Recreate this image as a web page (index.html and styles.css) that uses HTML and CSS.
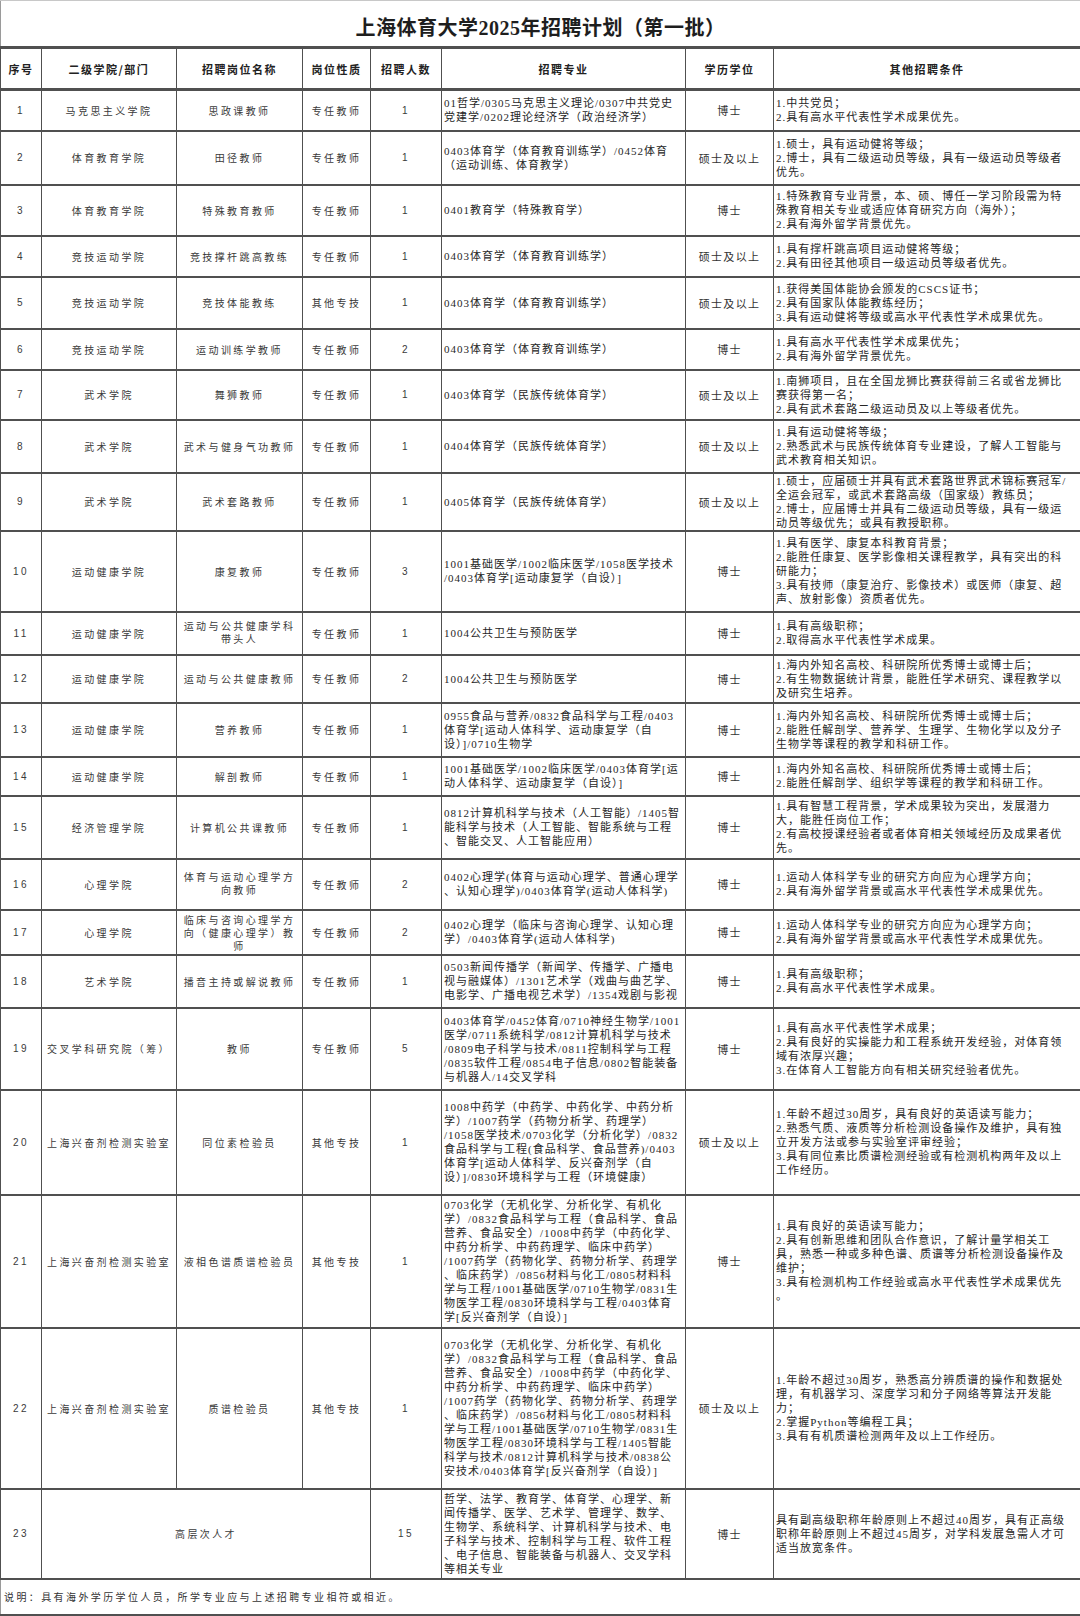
FILE: index.html
```html
<!DOCTYPE html>
<html lang="zh-CN">
<head>
<meta charset="utf-8">
<title>上海体育大学2025年招聘计划（第一批）</title>
<link rel="stylesheet" href="styles.css">
</head>
<body>
<div class="sheet">
<table class="plan">
<colgroup>
<col class="c1"><col class="c2"><col class="c3"><col class="c4"><col class="c5"><col class="c6"><col class="c7"><col class="c8">
</colgroup>
<tbody>
<tr class="h47"><td class="title" colspan="8">上海体育大学2025年招聘计划（第一批）</td></tr>
<tr class="h42 head">
<th>序号</th><th>二级学院/部门</th><th>招聘岗位名称</th><th>岗位性质</th><th>招聘人数</th><th>招聘专业</th><th>学历学位</th><th>其他招聘条件</th>
</tr>
<tr class="h41"><td class="s">1</td><td class="s">马克思主义学院</td><td class="s">思政课教师</td><td class="s">专任教师</td><td class="s">1</td>
<td class="m">01哲学/0305马克思主义理论/0307中共党史<br>党建学/0202理论经济学（政治经济学）</td><td class="d">博士</td>
<td class="m">1.中共党员；<br>2.具有高水平代表性学术成果优先。</td></tr>
<tr class="h54"><td class="s">2</td><td class="s">体育教育学院</td><td class="s">田径教师</td><td class="s">专任教师</td><td class="s">1</td>
<td class="m">0403体育学（体育教育训练学）/0452体育<br>（运动训练、体育教学）</td><td class="d">硕士及以上</td>
<td class="m">1.硕士，具有运动健将等级；<br>2.博士，具有二级运动员等级，具有一级运动员等级者<br>优先。</td></tr>
<tr class="h51"><td class="s">3</td><td class="s">体育教育学院</td><td class="s">特殊教育教师</td><td class="s">专任教师</td><td class="s">1</td>
<td class="m">0401教育学（特殊教育学）</td><td class="d">博士</td>
<td class="m">1.特殊教育专业背景，本、硕、博任一学习阶段需为特<br>殊教育相关专业或适应体育研究方向（海外）；<br>2.具有海外留学背景优先。</td></tr>
<tr class="h41"><td class="s">4</td><td class="s">竞技运动学院</td><td class="s">竞技撑杆跳高教练</td><td class="s">专任教师</td><td class="s">1</td>
<td class="m">0403体育学（体育教育训练学）</td><td class="d">硕士及以上</td>
<td class="m">1.具有撑杆跳高项目运动健将等级；<br>2.具有田径其他项目一级运动员等级者优先。</td></tr>
<tr class="h52"><td class="s">5</td><td class="s">竞技运动学院</td><td class="s">竞技体能教练</td><td class="s">其他专技</td><td class="s">1</td>
<td class="m">0403体育学（体育教育训练学）</td><td class="d">硕士及以上</td>
<td class="m">1.获得美国体能协会颁发的CSCS证书；<br>2.具有国家队体能教练经历；<br>3.具有运动健将等级或高水平代表性学术成果优先。</td></tr>
<tr class="h41"><td class="s">6</td><td class="s">竞技运动学院</td><td class="s">运动训练学教师</td><td class="s">专任教师</td><td class="s">2</td>
<td class="m">0403体育学（体育教育训练学）</td><td class="d">博士</td>
<td class="m">1.具有高水平代表性学术成果优先；<br>2.具有海外留学背景优先。</td></tr>
<tr class="h50"><td class="s">7</td><td class="s">武术学院</td><td class="s">舞狮教师</td><td class="s">专任教师</td><td class="s">1</td>
<td class="m">0403体育学（民族传统体育学）</td><td class="d">硕士及以上</td>
<td class="m">1.南狮项目，且在全国龙狮比赛获得前三名或省龙狮比<br>赛获得第一名；<br>2.具有武术套路二级运动员及以上等级者优先。</td></tr>
<tr class="h53"><td class="s">8</td><td class="s">武术学院</td><td class="s">武术与健身气功教师</td><td class="s">专任教师</td><td class="s">1</td>
<td class="m">0404体育学（民族传统体育学）</td><td class="d">硕士及以上</td>
<td class="m">1.具有运动健将等级；<br>2.熟悉武术与民族传统体育专业建设，了解人工智能与<br>武术教育相关知识。</td></tr>
<tr class="h56"><td class="s">9</td><td class="s">武术学院</td><td class="s">武术套路教师</td><td class="s">专任教师</td><td class="s">1</td>
<td class="m">0405体育学（民族传统体育学）</td><td class="d">硕士及以上</td>
<td class="m">1.硕士，应届硕士并具有武术套路世界武术锦标赛冠军/<br>全运会冠军，或武术套路高级（国家级）教练员；<br>2.博士，应届博士并具有二级运动员等级，具有一级运<br>动员等级优先；或具有教授职称。</td></tr>
<tr class="h81"><td class="s">10</td><td class="s">运动健康学院</td><td class="s">康复教师</td><td class="s">专任教师</td><td class="s">3</td>
<td class="m">1001基础医学/1002临床医学/1058医学技术<br>/0403体育学[运动康复学（自设）]</td><td class="d">博士</td>
<td class="m">1.具有医学、康复本科教育背景；<br>2.能胜任康复、医学影像相关课程教学，具有突出的科<br>研能力；<br>3.具有技师（康复治疗、影像技术）或医师（康复、超<br>声、放射影像）资质者优先。</td></tr>
<tr class="h43"><td class="s">11</td><td class="s">运动健康学院</td><td class="s wrap">运动与公共健康学科带头人</td><td class="s">专任教师</td><td class="s">1</td>
<td class="m">1004公共卫生与预防医学</td><td class="d">博士</td>
<td class="m">1.具有高级职称；<br>2.取得高水平代表性学术成果。</td></tr>
<tr class="h48"><td class="s">12</td><td class="s">运动健康学院</td><td class="s">运动与公共健康教师</td><td class="s">专任教师</td><td class="s">2</td>
<td class="m">1004公共卫生与预防医学</td><td class="d">博士</td>
<td class="m">1.海内外知名高校、科研院所优秀博士或博士后；<br>2.有生物数据统计背景，能胜任学术研究、课程教学以<br>及研究生培养。</td></tr>
<tr class="h54"><td class="s">13</td><td class="s">运动健康学院</td><td class="s">营养教师</td><td class="s">专任教师</td><td class="s">1</td>
<td class="m">0955食品与营养/0832食品科学与工程/0403<br>体育学[运动人体科学、运动康复学（自<br>设）]/0710生物学</td><td class="d">博士</td>
<td class="m">1.海内外知名高校、科研院所优秀博士或博士后；<br>2.能胜任解剖学、营养学、生理学、生物化学以及分子<br>生物学等课程的教学和科研工作。</td></tr>
<tr class="h39"><td class="s">14</td><td class="s">运动健康学院</td><td class="s">解剖教师</td><td class="s">专任教师</td><td class="s">1</td>
<td class="m">1001基础医学/1002临床医学/0403体育学[运<br>动人体科学、运动康复学（自设）]</td><td class="d">博士</td>
<td class="m">1.海内外知名高校、科研院所优秀博士或博士后；<br>2.能胜任解剖学、组织学等课程的教学和科研工作。</td></tr>
<tr class="h63"><td class="s">15</td><td class="s">经济管理学院</td><td class="s">计算机公共课教师</td><td class="s">专任教师</td><td class="s">1</td>
<td class="m">0812计算机科学与技术（人工智能）/1405智<br>能科学与技术（人工智能、智能系统与工程<br>、智能交叉、人工智能应用）</td><td class="d">博士</td>
<td class="m">1.具有智慧工程背景，学术成果较为突出，发展潜力<br>大，能胜任岗位工作；<br>2.有高校授课经验者或者体育相关领域经历及成果者优<br>先。</td></tr>
<tr class="h51"><td class="s">16</td><td class="s">心理学院</td><td class="s wrap">体育与运动心理学方向教师</td><td class="s">专任教师</td><td class="s">2</td>
<td class="m">0402心理学(体育与运动心理学、普通心理学<br>、认知心理学)/0403体育学(运动人体科学)</td><td class="d">博士</td>
<td class="m">1.运动人体科学专业的研究方向应为心理学方向；<br>2.具有海外留学背景或高水平代表性学术成果优先。</td></tr>
<tr class="h45"><td class="s">17</td><td class="s">心理学院</td><td class="s wrap tight">临床与咨询心理学方向（健康心理学）教师</td><td class="s">专任教师</td><td class="s">2</td>
<td class="m">0402心理学（临床与咨询心理学、认知心理<br>学）/0403体育学(运动人体科学)</td><td class="d">博士</td>
<td class="m">1.运动人体科学专业的研究方向应为心理学方向；<br>2.具有海外留学背景或高水平代表性学术成果优先。</td></tr>
<tr class="h53"><td class="s">18</td><td class="s">艺术学院</td><td class="s">播音主持或解说教师</td><td class="s">专任教师</td><td class="s">1</td>
<td class="m">0503新闻传播学（新闻学、传播学、广播电<br>视与融媒体）/1301艺术学（戏曲与曲艺学、<br>电影学、广播电视艺术学）/1354戏剧与影视</td><td class="d">博士</td>
<td class="m">1.具有高级职称；<br>2.具有高水平代表性学术成果。</td></tr>
<tr class="h82"><td class="s">19</td><td class="s">交叉学科研究院（筹）</td><td class="s">教师</td><td class="s">专任教师</td><td class="s">5</td>
<td class="m">0403体育学/0452体育/0710神经生物学/1001<br>医学/0711系统科学/0812计算机科学与技术<br>/0809电子科学与技术/0811控制科学与工程<br>/0835软件工程/0854电子信息/0802智能装备<br>与机器人/14交叉学科</td><td class="d">博士</td>
<td class="m">1.具有高水平代表性学术成果；<br>2.具有良好的实操能力和工程系统开发经验，对体育领<br>域有浓厚兴趣；<br>3.在体育人工智能方向有相关研究经验者优先。</td></tr>
<tr class="h105"><td class="s">20</td><td class="s">上海兴奋剂检测实验室</td><td class="s">同位素检验员</td><td class="s">其他专技</td><td class="s">1</td>
<td class="m">1008中药学（中药学、中药化学、中药分析<br>学）/1007药学（药物分析学、药理学）<br>/1058医学技术/0703化学（分析化学）/0832<br>食品科学与工程(食品科学、食品营养)/0403<br>体育学[运动人体科学、反兴奋剂学（自<br>设）]/0830环境科学与工程（环境健康）</td><td class="d">硕士及以上</td>
<td class="m">1.年龄不超过30周岁，具有良好的英语读写能力；<br>2.熟悉气质、液质等分析检测设备操作及维护，具有独<br>立开发方法或参与实验室评审经验；<br>3.具有同位素比质谱检测经验或有检测机构两年及以上<br>工作经历。</td></tr>
<tr class="h133"><td class="s">21</td><td class="s">上海兴奋剂检测实验室</td><td class="s">液相色谱质谱检验员</td><td class="s">其他专技</td><td class="s">1</td>
<td class="m">0703化学（无机化学、分析化学、有机化<br>学）/0832食品科学与工程（食品科学、食品<br>营养、食品安全）/1008中药学（中药化学、<br>中药分析学、中药药理学、临床中药学）<br>/1007药学（药物化学、药物分析学、药理学<br>、临床药学）/0856材料与化工/0805材料科<br>学与工程/1001基础医学/0710生物学/0831生<br>物医学工程/0830环境科学与工程/0403体育<br>学[反兴奋剂学（自设）]</td><td class="d">博士</td>
<td class="m">1.具有良好的英语读写能力；<br>2.具有创新思维和团队合作意识，了解计量学相关工<br>具，熟悉一种或多种色谱、质谱等分析检测设备操作及<br>维护；<br>3.具有检测机构工作经验或高水平代表性学术成果优先<br>。</td></tr>
<tr class="h161"><td class="s">22</td><td class="s">上海兴奋剂检测实验室</td><td class="s">质谱检验员</td><td class="s">其他专技</td><td class="s">1</td>
<td class="m">0703化学（无机化学、分析化学、有机化<br>学）/0832食品科学与工程（食品科学、食品<br>营养、食品安全）/1008中药学（中药化学、<br>中药分析学、中药药理学、临床中药学）<br>/1007药学（药物化学、药物分析学、药理学<br>、临床药学）/0856材料与化工/0805材料科<br>学与工程/1001基础医学/0710生物学/0831生<br>物医学工程/0830环境科学与工程/1405智能<br>科学与技术/0812计算机科学与技术/0838公<br>安技术/0403体育学[反兴奋剂学（自设）]</td><td class="d">硕士及以上</td>
<td class="m">1.年龄不超过30周岁，熟悉高分辨质谱的操作和数据处<br>理，有机器学习、深度学习和分子网络等算法开发能<br>力；<br>2.掌握Python等编程工具；<br>3.具有有机质谱检测两年及以上工作经历。</td></tr>
<tr class="h90"><td class="s">23</td><td class="s" colspan="3">高层次人才</td><td class="s">15</td>
<td class="m">哲学、法学、教育学、体育学、心理学、新<br>闻传播学、医学、艺术学、管理学、数学、<br>生物学、系统科学、计算机科学与技术、电<br>子科学与技术、控制科学与工程、软件工程<br>、电子信息、智能装备与机器人、交叉学科<br>等相关专业</td><td class="d">博士</td>
<td class="m">具有副高级职称年龄原则上不超过40周岁，具有正高级<br>职称年龄原则上不超过45周岁，对学科发展急需人才可<br>适当放宽条件。</td></tr>
<tr class="h36"><td class="note" colspan="8">说明：具有海外学历学位人员，所学专业应与上述招聘专业相符或相近。</td></tr>
</tbody>
</table>
</div>
</body>
</html>
```
FILE: styles.css
```css
html, body {
  margin: 0;
  padding: 0;
  background: #ffffff;
}

.sheet {
  width: 1080px;
  height: 1616px;
  overflow: hidden;
  background: #ffffff;
}

.plan {
  width: 1080px;
  border-collapse: collapse;
  table-layout: fixed;
  font-family: "Liberation Serif", "Noto Sans CJK SC", serif;
  color: #262626;
}

.c1 { width: 41px; }
.c2 { width: 135px; }
.c3 { width: 126px; }
.c4 { width: 68px; }
.c5 { width: 71px; }
.c6 { width: 244px; }
.c7 { width: 88px; }
.c8 { width: 307px; }

.plan td,
.plan th {
  padding: 0 2px;
  vertical-align: middle;
  border-left: 1px solid #505050;
  border-right: 1px solid #505050;
  border-top: 2px solid #505050;
  border-bottom: 2px solid #505050;
  overflow: hidden;
}

.title {
  text-align: center;
  font-family: "Liberation Serif", "Noto Sans CJK SC", serif;
  font-weight: bold;
  font-size: 20px;
  letter-spacing: 0.5px;
  color: #1e1e1e;
  padding-top: 6px !important;
  border-top: 1px solid #c8c8c8 !important;
  border-left: 1px solid #9a9a9a !important;
  border-right: 1px solid #c8c8c8 !important;
}

.head th {
  font-family: "Noto Sans CJK SC", sans-serif;
  font-weight: bold;
  font-size: 11px;
  letter-spacing: 1.5px;
  text-align: center;
  color: #222;
  border-top-width: 3px;
  border-bottom-width: 3px;
}

.s {
  font-family: "Liberation Sans", "Noto Sans CJK SC", sans-serif;
  font-size: 10px;
  letter-spacing: 2.4px;
  text-align: center;
  color: #3a3a3a;
  white-space: nowrap;
}

.s.wrap {
  white-space: normal;
  line-height: 13px;
  padding: 0 5px;
}

.s.tight {
  line-height: 13px;
  padding-top: 3px;
}

.m {
  font-size: 11px;
  letter-spacing: 1px;
  line-height: 14px;
  text-align: left;
  white-space: nowrap;
  color: #262626;
}

.d {
  font-size: 11px;
  letter-spacing: 1.3px;
  text-align: center;
  color: #333;
  white-space: nowrap;
}

.note {
  font-family: "Liberation Sans", "Noto Sans CJK SC", sans-serif;
  font-size: 10px;
  letter-spacing: 2.4px;
  text-align: left;
  color: #333;
  padding-left: 3px !important;
  border-left: 1px solid #9a9a9a !important;
}

.h36 { height: 36px; }
.h39 { height: 39px; }
.h41 { height: 41px; }
.h42 { height: 42px; }
.h43 { height: 43px; }
.h45 { height: 45px; }
.h47 { height: 47px; }
.h48 { height: 48px; }
.h50 { height: 50px; }
.h51 { height: 51px; }
.h52 { height: 52px; }
.h53 { height: 53px; }
.h54 { height: 54px; }
.h56 { height: 56px; }
.h63 { height: 63px; }
.h81 { height: 81px; }
.h82 { height: 82px; }
.h90 { height: 90px; }
.h105 { height: 105px; }
.h133 { height: 133px; }
.h161 { height: 161px; }
```
